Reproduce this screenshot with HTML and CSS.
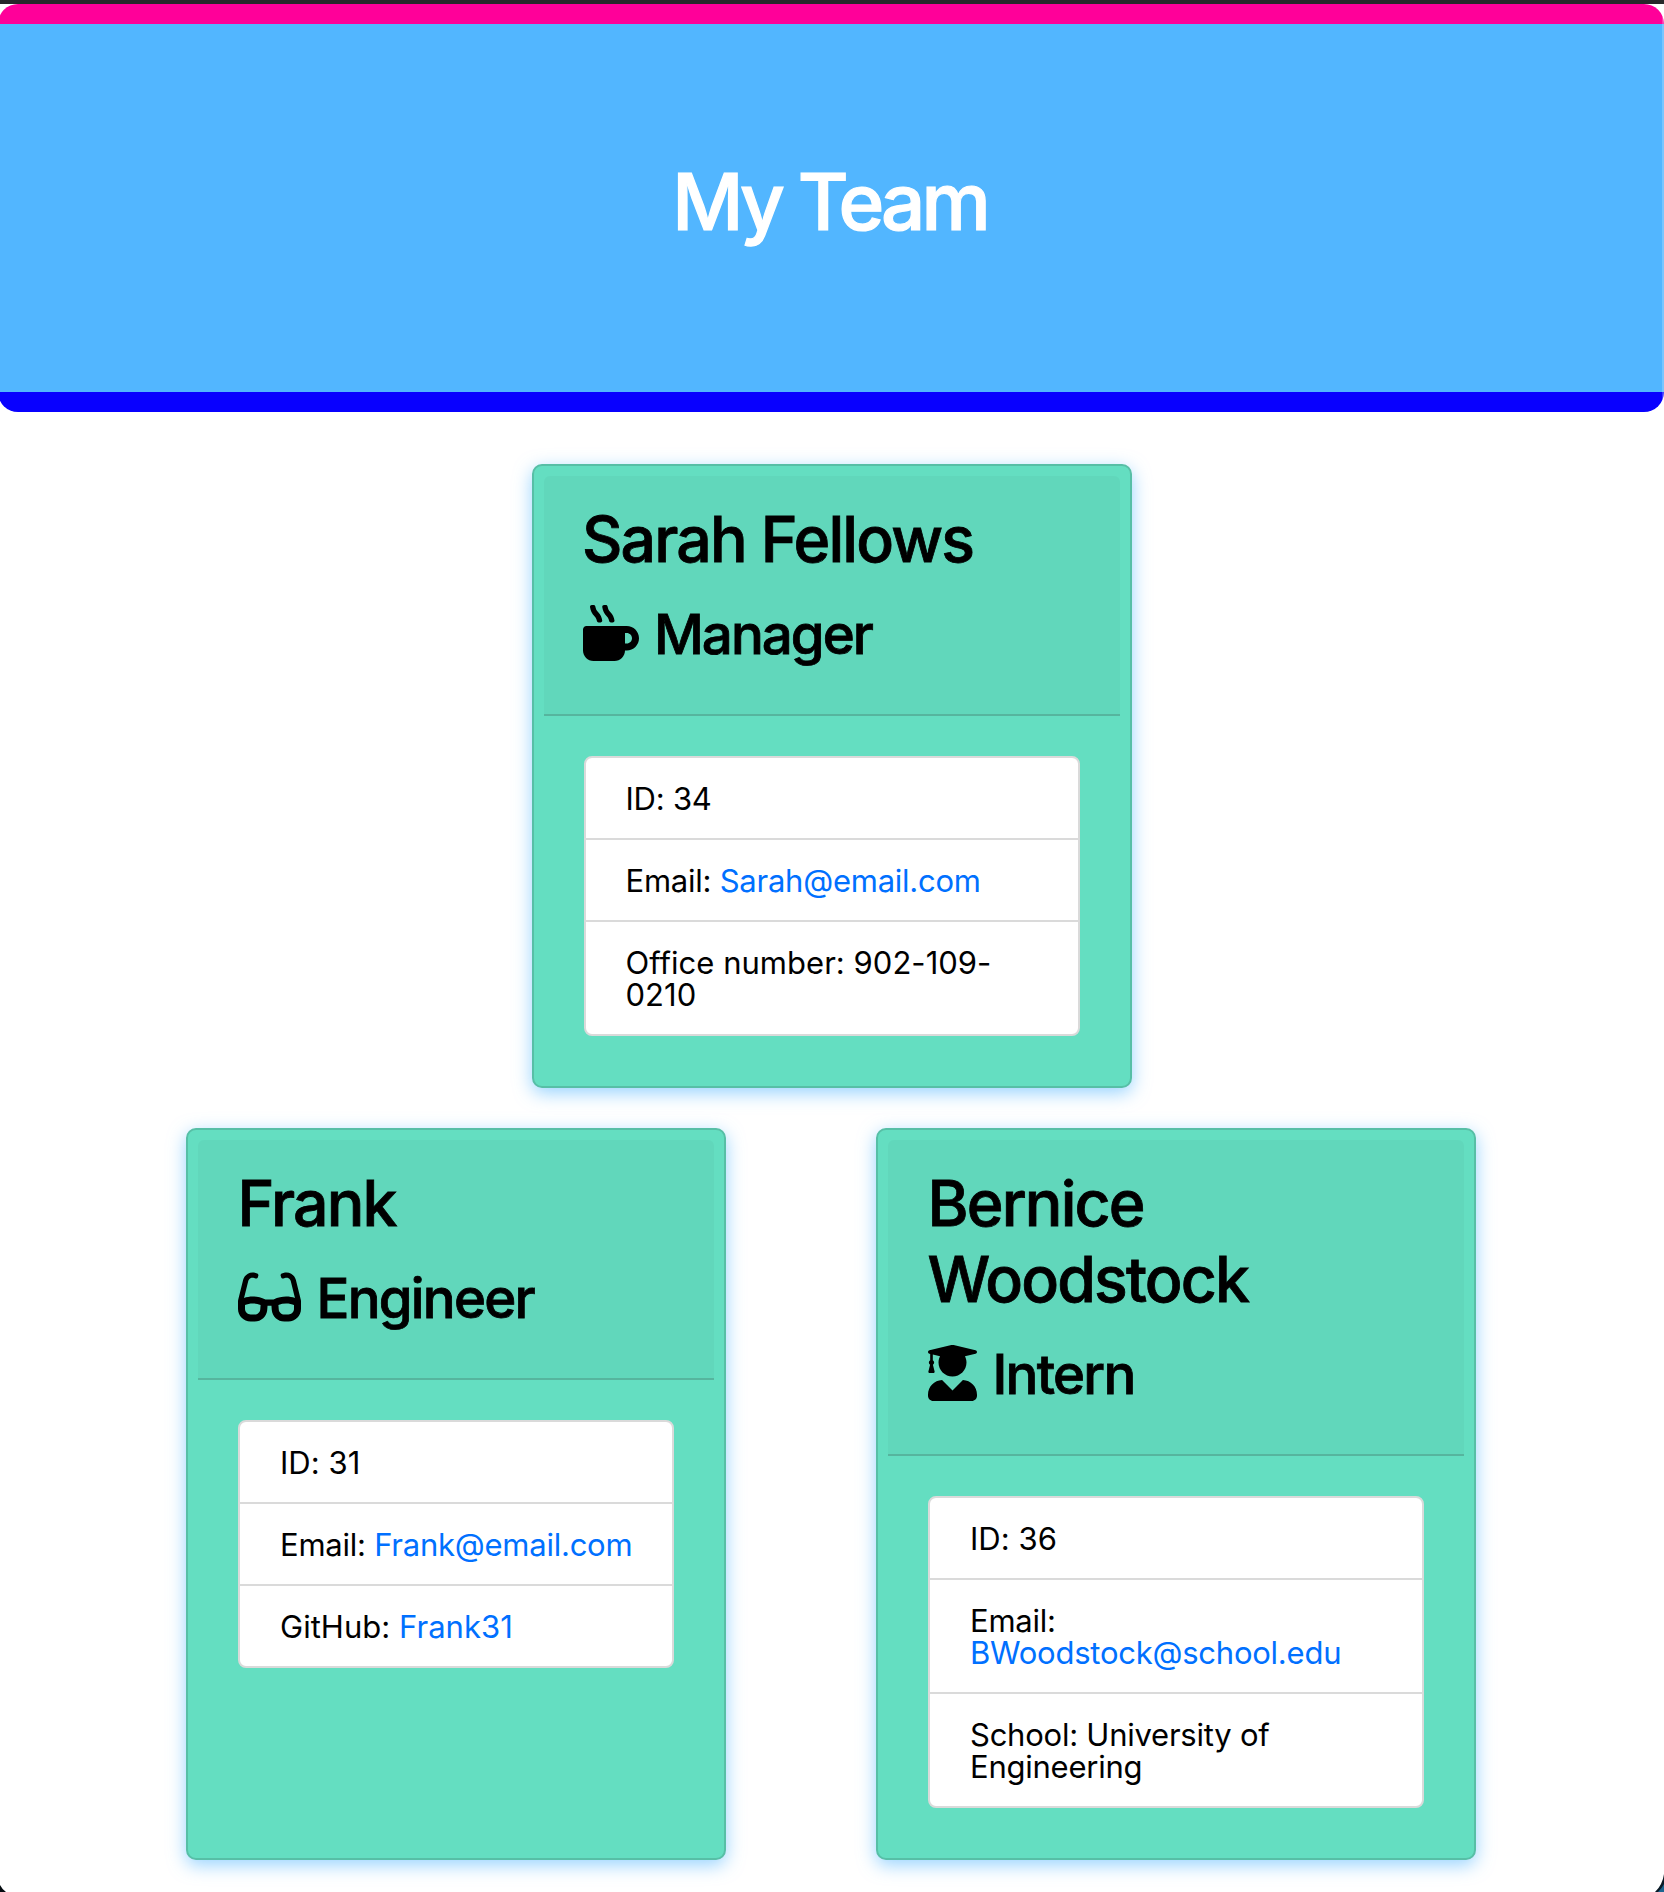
FILE: index.html
```html
<!DOCTYPE html>
<html lang="en">
<head>
<meta charset="utf-8">
<title>My Team</title>
<link rel="stylesheet" href="styles.css">
</head>
<body>
<header class="hero"><h1 class="hero-title">My Team</h1></header>
<main class="team">
  <div class="team-row team-row-lead">
    <article class="card card-lead">
      <div class="card-header">
        <h2 class="name">Sarah Fellows</h2>
        <h3 class="role"><svg class="icon" viewBox="0 0 512 512" width="56" height="56"><path d="M127.1 146.5c1.3 7.7 8 13.5 16 13.5h16.5c9.8 0 17.6-8.5 16.3-18-3.8-28.2-16.4-54.2-36.6-74.7-14.4-14.7-23.6-33.3-26.4-53.5C111.8 5.9 105 0 96.8 0H80.4C70.6 0 63 8.5 64.1 18c3.9 31.9 18 61.3 40.6 84.4 12 12.2 19.7 27.5 22.4 44.1zm112 0c1.3 7.7 8 13.5 16 13.5h16.5c9.8 0 17.6-8.5 16.3-18-3.8-28.2-16.4-54.2-36.6-74.7-14.4-14.7-23.6-33.3-26.4-53.5C223.8 5.9 217 0 208.8 0h-16.4c-9.8 0-17.5 8.5-16.3 18 3.9 31.9 18 61.3 40.6 84.4 12 12.2 19.7 27.5 22.4 44.1zM400 192H32c-17.7 0-32 14.3-32 32v192c0 53 43 96 96 96h192c53 0 96-43 96-96h16c61.8 0 112-50.2 112-112s-50.2-112-112-112zm0 160h-16v-96h16c26.5 0 48 21.5 48 48s-21.5 48-48 48z"/></svg>Manager</h3>
      </div>
      <ul class="details">
        <li>ID: 34</li>
        <li>Email: <a href="#">Sarah@email.com</a></li>
        <li class="loose">Office number: 902-109-<br>0210</li>
      </ul>
    </article>
  </div>
  <div class="team-row team-row-wide">
    <article class="card card-narrow">
      <div class="card-header">
        <h2 class="name">Frank</h2>
        <h3 class="role"><svg class="icon" viewBox="0 0 576 512" width="63" height="56"><path d="M574.1 280.37L528.75 98.66c-5.91-23.7-21.59-44.05-43-55.81-21.44-11.73-46.97-14.11-70.19-6.33l-15.25 5.08c-8.39 2.79-12.92 11.86-10.12 20.24l5.06 15.18c2.79 8.38 11.85 12.91 20.23 10.12l13.18-4.39c10.87-3.62 23-3.57 33.16 1.73 10.29 5.37 17.57 14.56 20.37 25.82l38.46 153.82c-22.19-6.81-49.79-12.46-81.2-12.46-34.77 0-73.98 7.02-114.85 26.74h-73.18c-40.87-19.74-80.08-26.75-114.86-26.75-31.42 0-59.02 5.65-81.21 12.46l38.46-153.83c2.79-11.25 10.09-20.45 20.38-25.81 10.16-5.3 22.28-5.35 33.15-1.73l13.17 4.39c8.38 2.79 17.44-1.74 20.23-10.12l5.06-15.18c2.8-8.38-1.73-17.45-10.12-20.24l-15.25-5.08c-23.22-7.78-48.75-5.41-70.19 6.33-21.41 11.77-37.09 32.11-43 55.8L1.9 280.37A64.218 64.218 0 0 0 0 295.86v70.25C0 429.01 51.58 480 115.2 480h37.12c60.28 0 110.37-45.94 114.88-105.37l2.93-38.63h35.75l2.93 38.63C313.31 434.06 363.4 480 423.68 480h37.12c63.62 0 115.2-50.99 115.2-113.88v-70.25c0-5.23-.64-10.43-1.9-15.5zm-370.72 89.42c-1.97 25.91-24.4 46.21-51.06 46.21H115.2C86.97 416 64 393.62 64 366.11v-37.54c18.12-6.49 43.42-12.92 72.58-12.92 23.86 0 47.26 4.33 69.93 12.92l-3.13 41.22zM512 366.12c0 27.51-22.97 49.88-51.2 49.88h-37.12c-26.67 0-49.1-20.3-51.06-46.21l-3.13-41.22c22.67-8.59 46.08-12.92 69.95-12.92 29.12 0 54.43 6.44 72.55 12.93v37.54z"/></svg>Engineer</h3>
      </div>
      <ul class="details">
        <li class="loose">ID: 31</li>
        <li>Email: <a href="#">Frank@email.com</a></li>
        <li class="loose">GitHub: <a href="#">Frank31</a></li>
      </ul>
    </article>
    <article class="card">
      <div class="card-header">
        <h2 class="name">Bernice<br>Woodstock</h2>
        <h3 class="role"><svg class="icon" viewBox="0 0 448 512" width="49" height="56"><path d="M319.4 320.6L224 416l-95.4-95.4C57.1 323.7 0 382.2 0 454.4v9.6c0 26.5 21.5 48 48 48h352c26.5 0 48-21.5 48-48v-9.6c0-72.2-57.1-130.7-128.6-133.8zM13.6 79.8l6.4 1.5v58.4c-7 4.2-12 11.5-12 20.3 0 8.4 4.6 15.4 11.1 19.7L3.5 242c-1.7 6.9 2.1 14 7.6 14h41.8c5.5 0 9.3-7.1 7.6-14l-15.6-62.3C51.4 175.4 56 168.4 56 160c0-8.8-5-16.1-12-20.3V87.1l66 15.9c-8.6 17.2-14 36.4-14 57 0 70.7 57.3 128 128 128s128-57.3 128-128c0-20.6-5.3-39.8-14-57l96.3-23.2c18.2-4.4 18.2-27.1 0-31.5l-190.4-46c-13-3.1-26.7-3.1-39.7 0L13.6 48.2c-18.1 4.4-18.1 27.2 0 31.6z"/></svg>Intern</h3>
      </div>
      <ul class="details">
        <li class="loose">ID: 36</li>
        <li>Email:<br><a href="#">BWoodstock@school.edu</a></li>
        <li>School: University of<br>Engineering</li>
      </ul>
    </article>
  </div>
</main>
<div class="edge"></div>
<svg class="corner corner-left" width="8" height="8" viewBox="0 0 8 8"><path d="M0 1Q2 5 6 8H0Z" fill="#050b10"/></svg>
<svg class="corner corner-right" width="9" height="18" viewBox="0 0 9 18"><path d="M9 0Q7.500 11 0 18H9Z" fill="#0a1a26"/><path d="M9 10Q7 14 3 18H9Z" fill="#1b6590"/></svg>
</body>
</html>
```
FILE: styles.css
```css
* { box-sizing: border-box; }
body {
  position: relative;
  margin: 0;
  height: 1892px;
  overflow: hidden;
  background: #fff;
  color: #000;
  font: 31px/32px Inter, "Liberation Sans", sans-serif;
  border-top: 4px solid #27282a;
}
h1, h2, h3, ul { margin: 0; padding: 0; font-weight: 500; }
h1, h2, h3 { -webkit-text-stroke: .8px currentColor; }
a { color: #0070ff; text-decoration: none; }
.hero {
  height: 408px;
  margin-left: -2px;
  border-radius: 20px;
  border-top: 20px solid #ff0099;
  border-bottom: 20px solid #0800ff;
  background: #52b6ff;
  display: flex;
  justify-content: center;
  padding-top: 130px;
}
.hero-title {
  font-size: 78px;
  line-height: 96px;
  color: #fff;
  letter-spacing: -4px;
  padding-right: 3px;
  -webkit-text-stroke-width: 1.2px;
}
.team { padding-top: 52px; display: flex; flex-direction: column; gap: 40px; }
.team-row { display: flex; justify-content: center; gap: 150px; }
.team-row-lead { padding-right: 1px; }
.team-row-wide { padding-right: 2px; }
.card {
  width: 600px;
  padding: 10px;
  border: 2px solid #57bfa6;
  border-radius: 10px;
  background: #64dec1;
  box-shadow: 0 5px 18px rgba(82, 182, 255, .6);
}
.card-narrow { width: 540px; }
.card-header {
  padding: 25px 40px 46px;
  border-bottom: 2px solid #56b59e;
  border-radius: 6px 6px 0 0;
  background: #61d7bb;
}
.card-lead .card-header { padding-left: 39px; }
.name { font-size: 62.6px; line-height: 76px; letter-spacing: -1.85px; margin-left: -.5px; }
.role { font-size: 54.6px; line-height: 67px; margin-top: 24px; letter-spacing: -1.75px; }
.card-lead .role { letter-spacing: -1.95px; }
.icon { vertical-align: -7px; margin-right: 15.5px; }
.details {
  margin: 40px;
  border: 2px solid #dadada;
  border-radius: 8px;
  background: #fff;
  list-style: none;
  font-weight: 400;
  letter-spacing: -.24px;
  white-space: nowrap;
}
.details li { padding: 25px 40px 23px; }
.details li + li { border-top: 2px solid #dadada; }
.details .loose { letter-spacing: .03px; }
/* Window edge and rounded bottom corners, over the page */
.edge {
  position: absolute;
  top: -4px;
  right: 0;
  width: 2px;
  height: 1892px;
  background: rgba(255, 255, 255, .22);
}
.corner { position: absolute; bottom: 0; }
.corner-left { left: 0; }
.corner-right { right: 0; }
```
